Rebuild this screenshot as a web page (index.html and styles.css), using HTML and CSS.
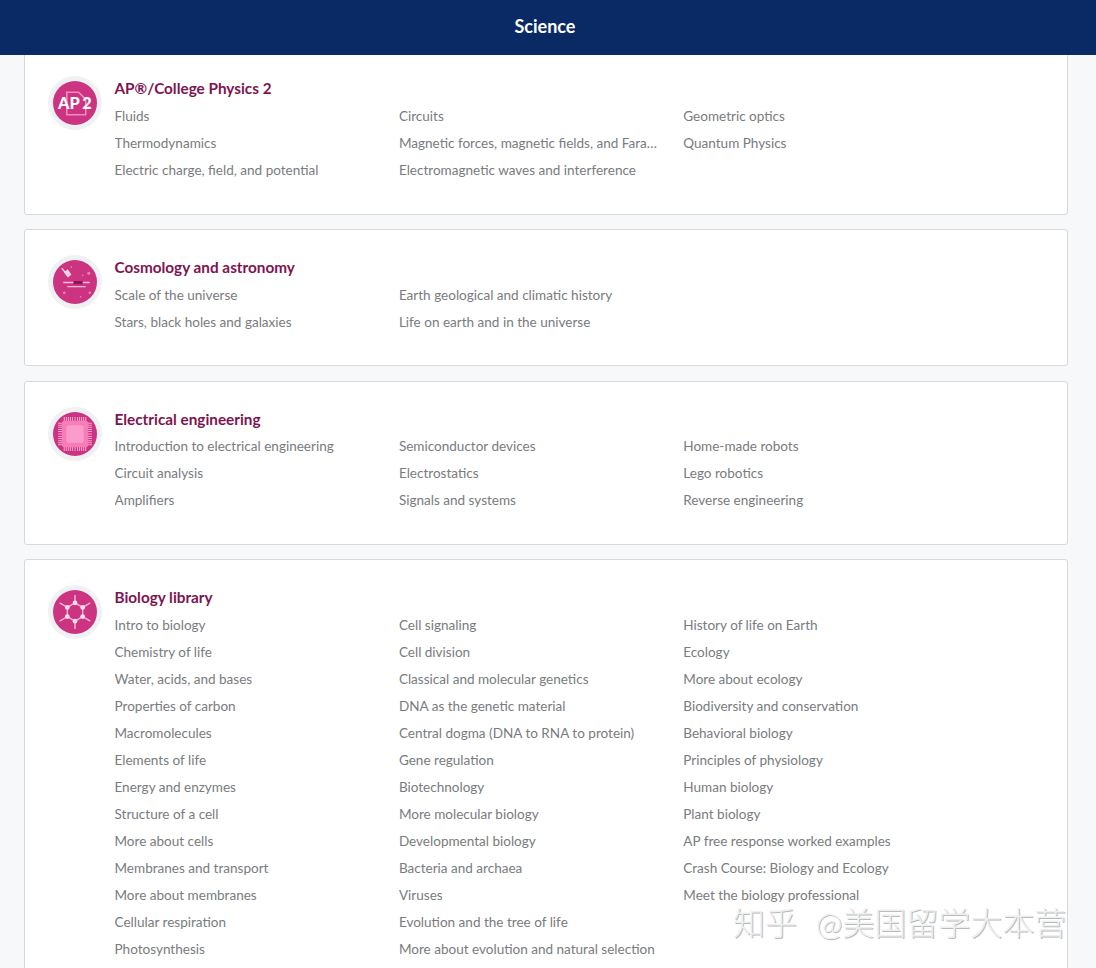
FILE: index.html
```html
<!DOCTYPE html>
<html lang="en">
<head>
<meta charset="utf-8">
<title>Science</title>
<link rel="stylesheet" href="styles.css">
</head>
<body>
<div class="page">
  <header class="topbar"><h1 class="topbar-title">Science</h1></header>
  <main class="list">
    <section class="card">
      <div class="badge">
        <svg class="badge-art" viewBox="0 0 43 43">
          <circle cx="21.5" cy="21.5" r="21.5" fill="#cc3380"/>
          <path d="M13.500 33V11h11.500l7 7v15z" fill="none" stroke="#f78dc1" stroke-width="1.500"/>
          <text class="ap-text" x="5" y="27.500">AP</text>
          <text class="ap-text" x="28.500" y="27.500">2</text>
        </svg>
      </div>
      <div class="body">
        <h2 class="title">AP®/College Physics 2</h2>
        <div class="topics">
          <ul class="col"><li>Fluids</li><li>Thermodynamics</li><li>Electric charge, field, and potential</li></ul>
          <ul class="col"><li>Circuits</li><li>Magnetic forces, magnetic fields, and Faraday's law</li><li>Electromagnetic waves and interference</li></ul>
          <ul class="col"><li>Geometric optics</li><li>Quantum Physics</li></ul>
        </div>
      </div>
    </section>
    <section class="card">
      <div class="badge">
        <svg class="badge-art" viewBox="0 0 43 43">
          <circle cx="21.5" cy="21.5" r="21.5" fill="#cc3380"/>
          <path d="M8.500 8l6 7" stroke="#fbd0e4" stroke-width="1.400"/>
          <path d="M10.500 12l4-3 3.500 5.500-3.500 2.500z" fill="#fbd0e4"/>
          <path d="M10 22h26M14 26h18" stroke="#f9bcd9" stroke-width="1.300"/>
          <rect x="20" y="20.500" width="9" height="3" fill="#8e1450"/>
          <g fill="#ec84b7"><circle cx="35" cy="13" r="1.500"/><circle cx="11" cy="32" r="1.300"/><circle cx="36" cy="32" r="1.300"/><circle cx="18" cy="7" r=".8"/><circle cx="29" cy="15" r=".8"/><circle cx="27" cy="36" r=".8"/></g>
        </svg>
      </div>
      <div class="body">
        <h2 class="title">Cosmology and astronomy</h2>
        <div class="topics">
          <ul class="col"><li>Scale of the universe</li><li>Stars, black holes and galaxies</li></ul>
          <ul class="col"><li>Earth geological and climatic history</li><li>Life on earth and in the universe</li></ul>
        </div>
      </div>
    </section>
    <section class="card">
      <div class="badge">
        <svg class="badge-art" viewBox="0 0 43 43">
          <circle cx="21.5" cy="21.5" r="21.5" fill="#cc3380"/>
          <path d="M11 5v33M13 5v33M15 5v33M17 5v33M19 5v33M21.500 5v33M24 5v33M26 5v33M28 5v33M30 5v33M32 5v33M5 11h33M5 13h33M5 15h33M5 17h33M5 19h33M5 21.500h33M5 24h33M5 26h33M5 28h33M5 30h33M5 32h33" stroke="#fba6cf" stroke-width="1"/>
          <rect x="8.500" y="8.500" width="26" height="26" rx="3" fill="#f77db8"/>
          <rect x="13" y="13" width="17" height="17" rx="2.500" fill="#fd9ccb"/>
        </svg>
      </div>
      <div class="body">
        <h2 class="title">Electrical engineering</h2>
        <div class="topics">
          <ul class="col"><li>Introduction to electrical engineering</li><li>Circuit analysis</li><li>Amplifiers</li></ul>
          <ul class="col"><li>Semiconductor devices</li><li>Electrostatics</li><li>Signals and systems</li></ul>
          <ul class="col"><li>Home-made robots</li><li>Lego robotics</li><li>Reverse engineering</li></ul>
        </div>
      </div>
    </section>
    <section class="card">
      <div class="badge">
        <svg class="badge-art" viewBox="0 0 43 43">
          <circle cx="21.5" cy="21.5" r="21.5" fill="#cc3380"/>
          <g stroke="#f9b3d4" stroke-width="1.400" fill="none">
            <path d="M21.500 12.500l7.500 4.500v9l-7.500 4.500-7.500-4.500v-9z"/>
            <path d="M21.500 12.500V5M29 17l7.500-4.500M29 26l7.500 4.500M21.500 30.500V38M14 26l-7.500 4.500M14 17L6.500 12.500"/>
          </g>
          <g fill="#fde0ee"><circle cx="21.500" cy="12.500" r="2.300"/><circle cx="29" cy="17" r="2.300"/><circle cx="29" cy="26" r="2.300"/><circle cx="21.500" cy="30.500" r="2.300"/><circle cx="14" cy="26" r="2.300"/><circle cx="14" cy="17" r="2.300"/></g>
        </svg>
      </div>
      <div class="body">
        <h2 class="title">Biology library</h2>
        <div class="topics">
          <ul class="col"><li>Intro to biology</li><li>Chemistry of life</li><li>Water, acids, and bases</li><li>Properties of carbon</li><li>Macromolecules</li><li>Elements of life</li><li>Energy and enzymes</li><li>Structure of a cell</li><li>More about cells</li><li>Membranes and transport</li><li>More about membranes</li><li>Cellular respiration</li><li>Photosynthesis</li></ul>
          <ul class="col"><li>Cell signaling</li><li>Cell division</li><li>Classical and molecular genetics</li><li>DNA as the genetic material</li><li>Central dogma (DNA to RNA to protein)</li><li>Gene regulation</li><li>Biotechnology</li><li>More molecular biology</li><li>Developmental biology</li><li>Bacteria and archaea</li><li>Viruses</li><li>Evolution and the tree of life</li><li>More about evolution and natural selection</li></ul>
          <ul class="col"><li>History of life on Earth</li><li>Ecology</li><li>More about ecology</li><li>Biodiversity and conservation</li><li>Behavioral biology</li><li>Principles of physiology</li><li>Human biology</li><li>Plant biology</li><li>AP free response worked examples</li><li>Crash Course: Biology and Ecology</li><li>Meet the biology professional</li></ul>
        </div>
      </div>
    </section>
  </main>
  <div class="watermark">知乎 @美国留学大本营</div>
</div>
</body>
</html>
```
FILE: styles.css
```css
* { box-sizing: border-box; }
html, body { margin: 0; padding: 0; height: 968px; overflow: hidden; }
body { background: #f7f8fa; font-family: Lato, "Noto Sans CJK SC", sans-serif; }
.page { position: relative; height: 968px; overflow: hidden; }
.topbar { position: relative; z-index: 2; height: 55px; padding-bottom: 4px; background: #0a2a66; display: flex; align-items: center; justify-content: center; }
.topbar-title { margin: 0 6px 0 0; color: #fff; font-size: 18px; font-weight: 700; line-height: 1; }
.list { margin-top: -4.5px; padding: 0 28px 0 24px; display: flex; flex-direction: column; gap: 14.5px; }
.card { display: flex; background: #fff; border: 1px solid #d6d8da; border-radius: 3px; padding: 24px 0 29.5px 22.5px; }
.card:first-child { padding-top: 23.6px; padding-bottom: 30px; }
.badge { flex: none; width: 54px; height: 54px; margin: 1px 13px 0 0; border-radius: 50%; background: #f0f1f3; display: flex; align-items: center; justify-content: center; }
.badge-art { display: block; width: 44px; height: 44px; }
.ap-text { fill: #fff; font-family: Lato, sans-serif; font-size: 16px; font-weight: 900; }
.body { flex: none; width: 854px; }
.title { margin: 0; color: #7d1450; font-size: 15.3px; font-weight: 700; line-height: 27.5px; }
.topics { display: flex; }
.col { flex: none; width: 284.4px; margin: 0; padding: 0 24px 0 0; list-style: none; }
.col li { color: #797c80; font-size: 13.54px; line-height: 27px; white-space: nowrap; overflow: hidden; text-overflow: ellipsis; }
.watermark { position: absolute; z-index: 3; left: 733px; top: 904px; color: #eeefef; font-size: 32px; line-height: 38px; word-spacing: 10px; white-space: nowrap; text-shadow: 1px 1px 0 #b9bbbd; font-weight: 300; }
```
